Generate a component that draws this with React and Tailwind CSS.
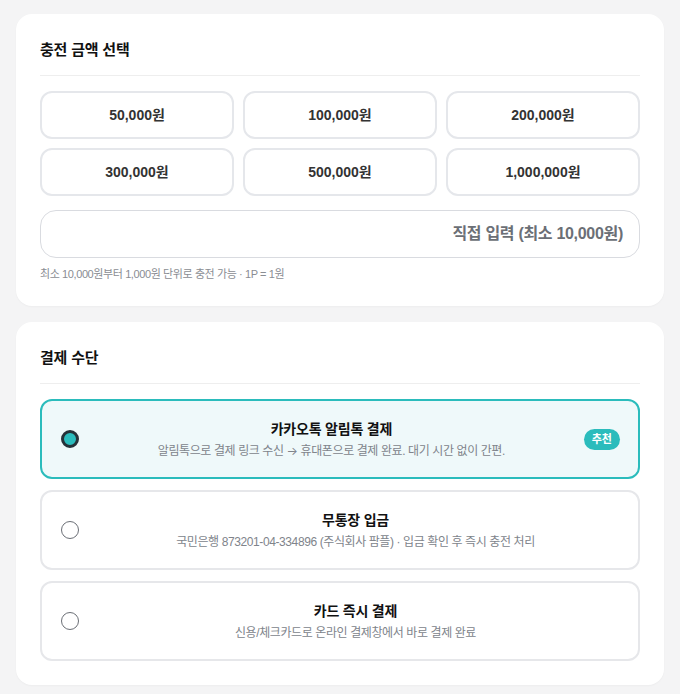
import React, { useState } from 'react';

const AMOUNTS = ['50,000원', '100,000원', '200,000원', '300,000원', '500,000원', '1,000,000원'];

const METHODS = [
  { id: 'kakao', title: '카카오톡 알림톡 결제', desc: <>알림톡으로 결제 링크 수신 <span className="font-['Inter']">→</span> 휴대폰으로 결제 완료. 대기 시간 없이 간편.</>, badge: '추천' },
  { id: 'bank', title: '무통장 입금', desc: '국민은행 873201-04-334896 (주식회사 팜플) · 입금 확인 후 즉시 충전 처리' },
  { id: 'card', title: '카드 즉시 결제', desc: '신용/체크카드로 온라인 결제창에서 바로 결제 완료' },
];

export default function App() {
  const [method, setMethod] = useState('kakao');
  const [amount, setAmount] = useState('');

  return (
    <div className="min-h-screen bg-[#f4f4f5] px-4 pt-[14px] pb-4 flex flex-col gap-4" style={{ fontFamily: '"Liberation Sans", "Noto Sans CJK KR", sans-serif' }}>
      {/* 충전 금액 */}
      <div className="bg-white rounded-2xl px-6 pt-6 pb-6 shadow-[0_1px_2px_rgba(0,0,0,0.03)]">
        <h2 className="text-[15px] leading-6 font-bold tracking-[-0.2px] text-[#111] pb-[13px] border-b border-[#eeeeee]">충전 금액 선택</h2>
        <div className="grid grid-cols-3 gap-[9px] mt-[15px]">
          {AMOUNTS.map((a) => (
            <button
              key={a}
              onClick={() => setAmount(a)}
              className="h-12 rounded-xl border-2 border-[#e5e7eb] bg-white text-[14px] font-bold text-[#333]"
            >
              {a}
            </button>
          ))}
        </div>
        <div className="mt-[14px] h-12 rounded-2xl border border-[#d9dbe0] flex items-center justify-end px-4">
          <span className="text-[16px] font-bold tracking-[-0.3px] text-[#6b6f76]">직접 입력 (최소 10,000원)</span>
        </div>
        <p className="mt-[8px] text-[11px] leading-4 tracking-[-0.4px] text-[#8a8d93]">최소 10,000원부터 1,000원 단위로 충전 가능 · 1P = 1원</p>
      </div>

      {/* 결제 수단 */}
      <div className="bg-white rounded-2xl px-6 pt-6 pb-6 shadow-[0_1px_2px_rgba(0,0,0,0.03)]">
        <h2 className="text-[15px] leading-6 font-bold tracking-[-0.2px] text-[#111] pb-[13px] border-b border-[#eeeeee]">결제 수단</h2>
        <div className="flex flex-col gap-[11px] mt-[15px]">
          {METHODS.map((m) => {
            const active = method === m.id;
            return (
              <button
                key={m.id}
                onClick={() => setMethod(m.id)}
                className={`h-20 rounded-xl border-2 flex items-center gap-3 pl-[19px] pr-[18px] text-left ${active ? 'border-[#2bbcbc] bg-[#eff9fa]' : 'border-[#e6e7ea] bg-white'}`}
              >
                {active ? (
                  <span className="w-[18px] h-[18px] rounded-full border-[3px] border-[#263238] bg-[#2bbcbc] shrink-0" />
                ) : (
                  <span className="w-[18px] h-[18px] rounded-full border-[1.5px] border-[#6b6f76] bg-white shrink-0" />
                )}
                <div className="flex-1 text-center">
                  <div className="text-[14px] leading-5 font-bold tracking-[-0.2px] text-[#111]">{m.title}</div>
                  <div className="mt-[4px] text-[12px] leading-4 tracking-[-0.4px] text-[#80848b]">{m.desc}</div>
                </div>
                {m.badge && (
                  <span className="shrink-0 h-[21px] px-2 rounded-full bg-[#2bbcbc] text-white text-[11px] font-bold flex items-center">{m.badge}</span>
                )}
              </button>
            );
          })}
        </div>
      </div>
    </div>
  );
}
